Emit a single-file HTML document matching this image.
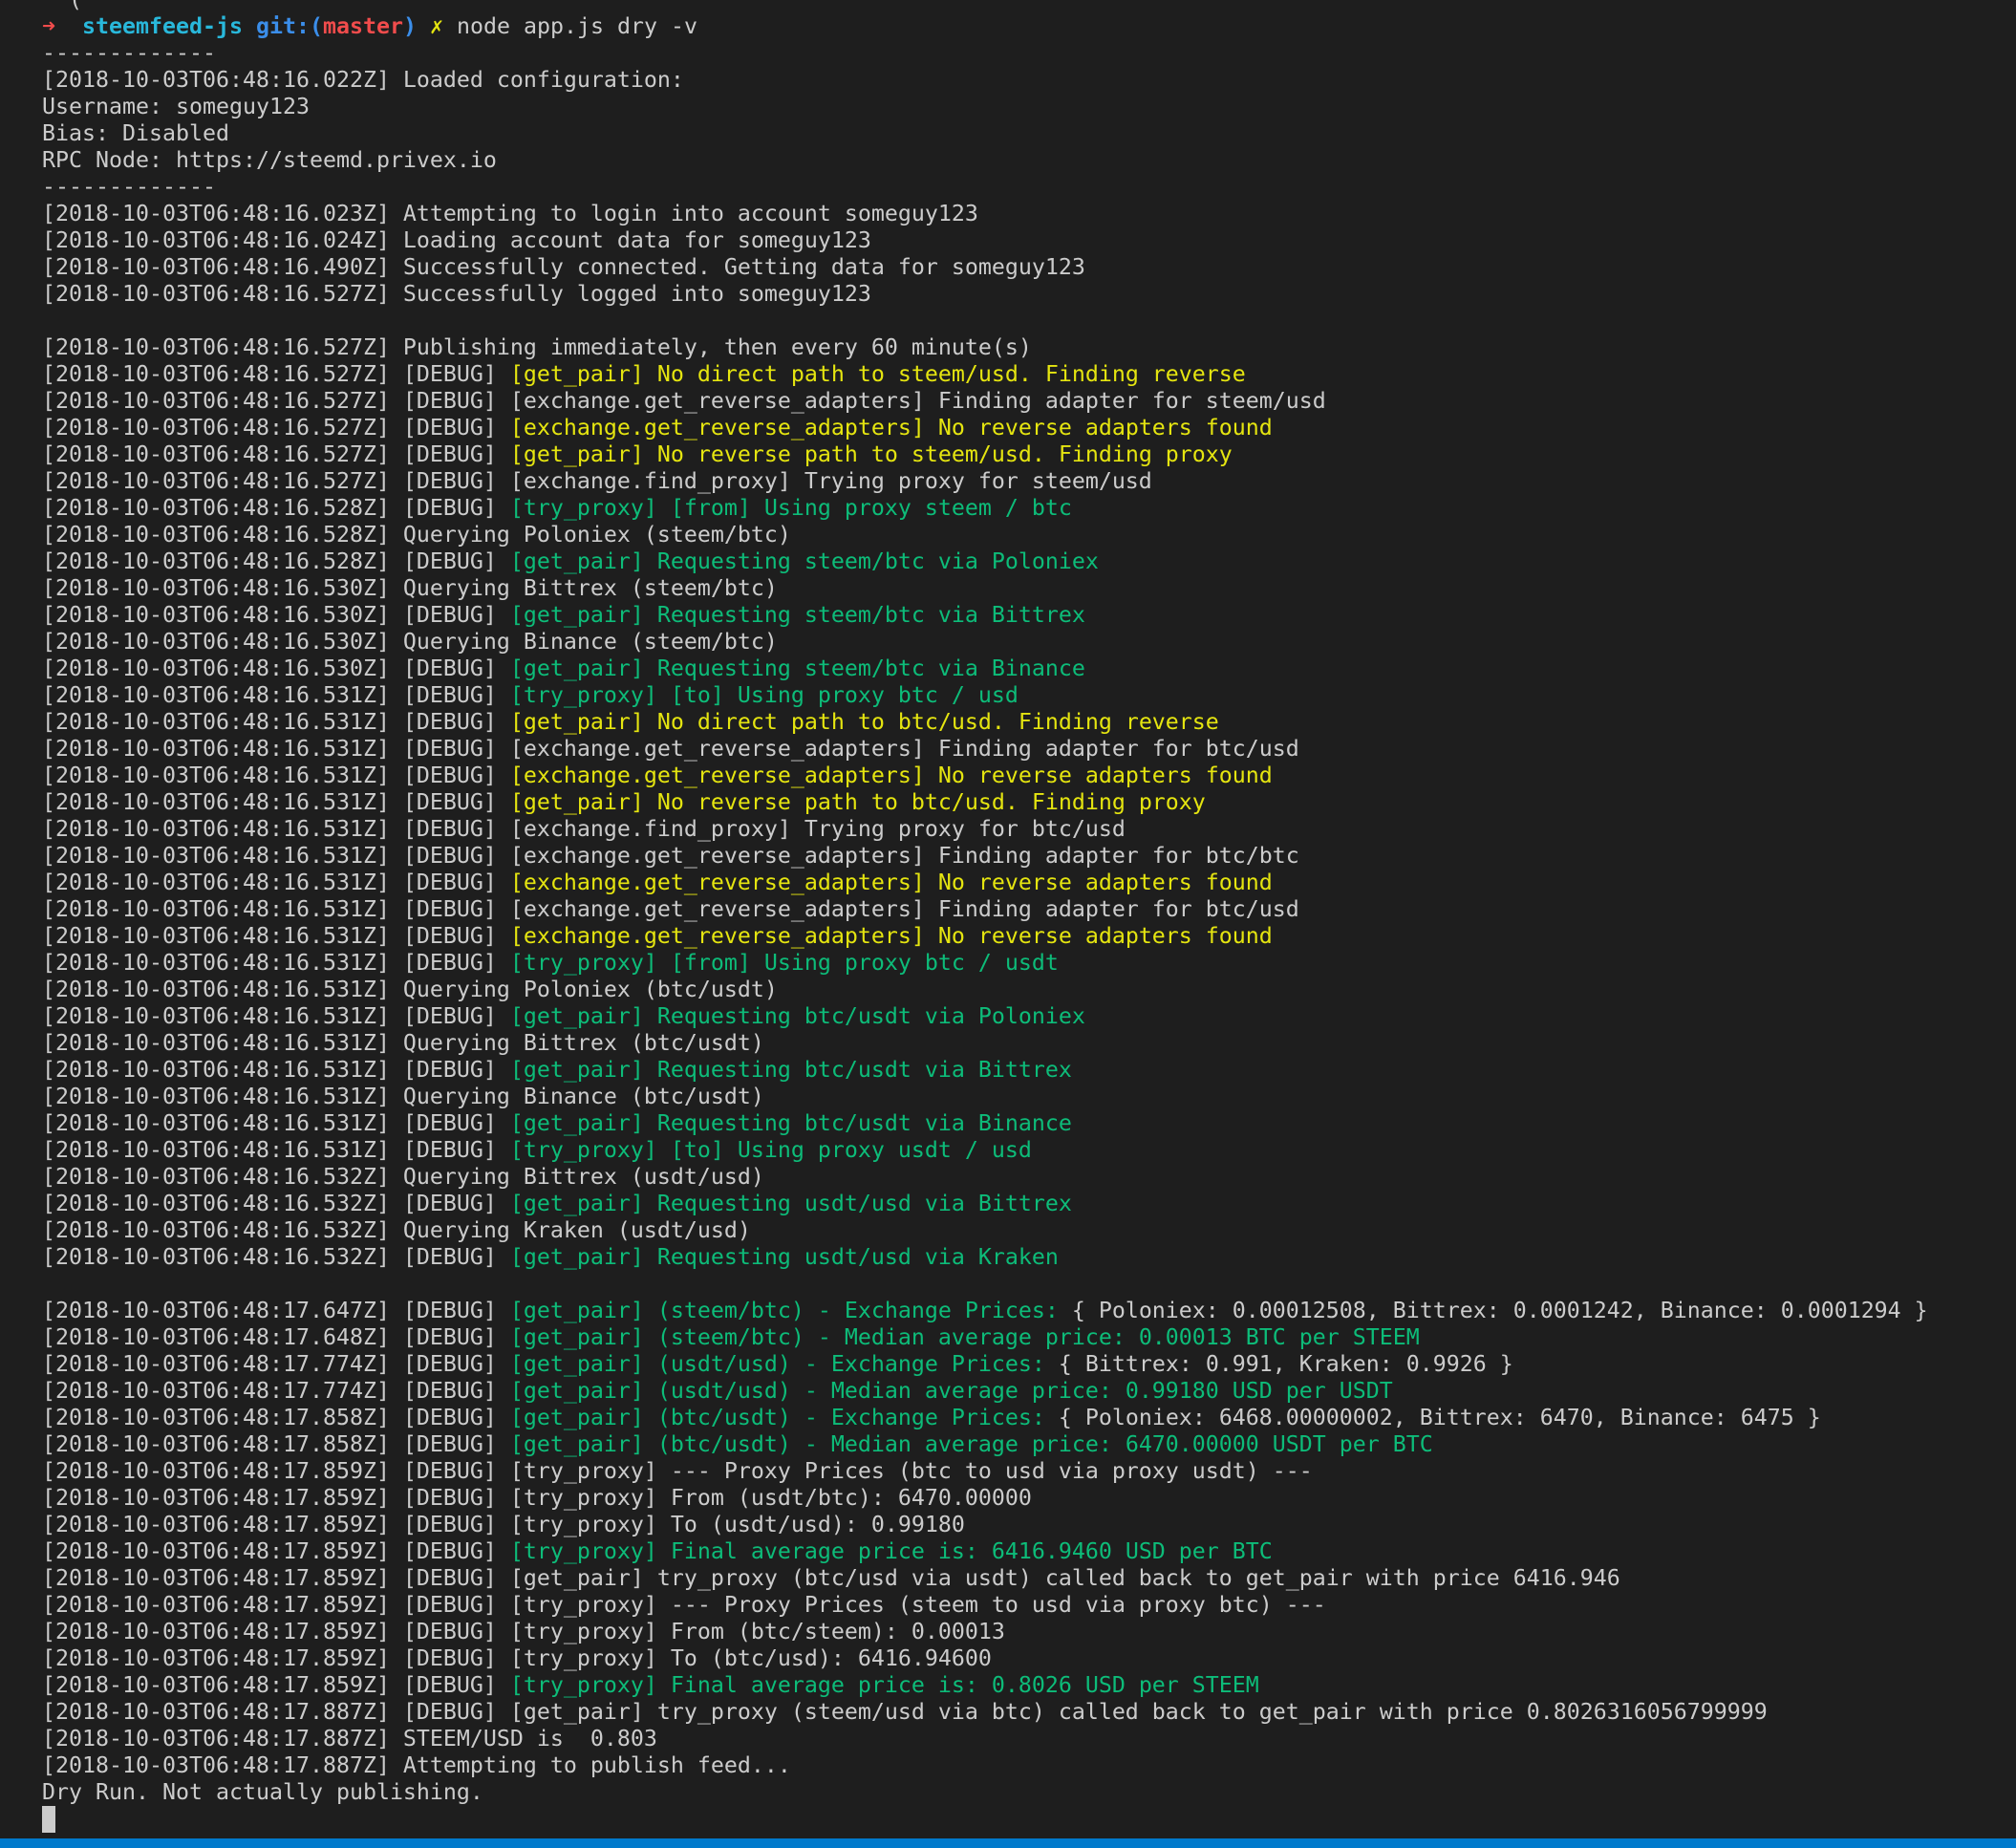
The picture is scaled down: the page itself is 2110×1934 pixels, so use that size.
<!DOCTYPE html>
<html><head><meta charset="utf-8"><style>
html,body{margin:0;padding:0;background:#1e1e1e;width:2110px;height:1934px;overflow:hidden;position:relative}
pre{position:absolute;left:44px;top:-14px;margin:0;font-family:"DejaVu Sans Mono","Liberation Mono",monospace;font-size:23.25px;line-height:28px;color:#cccccc;white-space:pre}
.y{color:#e5e510}.g{color:#0dbc79}.r{color:#f14c4c}.c{color:#29b8db;font-weight:bold}.b{color:#3b8eea;font-weight:bold}
.cur{display:inline-block;width:14px;height:28px;background:#cccccc;vertical-align:top}
.bar{position:absolute;left:0;bottom:0;width:2110px;height:10px;background:#007acc}
</style></head><body><pre>  (
<span class="r">➜</span>  <span class="c">steemfeed-js</span> <span class="b">git:(</span><span class="r" style="font-weight:bold">master</span><span class="b">)</span> <span class="y">✗</span> node app.js dry -v
-------------
[2018-10-03T06:48:16.022Z] Loaded configuration:
Username: someguy123
Bias: Disabled
RPC Node: https://steemd.privex.io
-------------
[2018-10-03T06:48:16.023Z] Attempting to login into account someguy123
[2018-10-03T06:48:16.024Z] Loading account data for someguy123
[2018-10-03T06:48:16.490Z] Successfully connected. Getting data for someguy123
[2018-10-03T06:48:16.527Z] Successfully logged into someguy123

[2018-10-03T06:48:16.527Z] Publishing immediately, then every 60 minute(s)
[2018-10-03T06:48:16.527Z] [DEBUG] <span class="y">[get_pair] No direct path to steem/usd. Finding reverse</span>
[2018-10-03T06:48:16.527Z] [DEBUG] [exchange.get_reverse_adapters] Finding adapter for steem/usd
[2018-10-03T06:48:16.527Z] [DEBUG] <span class="y">[exchange.get_reverse_adapters] No reverse adapters found</span>
[2018-10-03T06:48:16.527Z] [DEBUG] <span class="y">[get_pair] No reverse path to steem/usd. Finding proxy</span>
[2018-10-03T06:48:16.527Z] [DEBUG] [exchange.find_proxy] Trying proxy for steem/usd
[2018-10-03T06:48:16.528Z] [DEBUG] <span class="g">[try_proxy] [from] Using proxy steem / btc</span>
[2018-10-03T06:48:16.528Z] Querying Poloniex (steem/btc)
[2018-10-03T06:48:16.528Z] [DEBUG] <span class="g">[get_pair] Requesting steem/btc via Poloniex</span>
[2018-10-03T06:48:16.530Z] Querying Bittrex (steem/btc)
[2018-10-03T06:48:16.530Z] [DEBUG] <span class="g">[get_pair] Requesting steem/btc via Bittrex</span>
[2018-10-03T06:48:16.530Z] Querying Binance (steem/btc)
[2018-10-03T06:48:16.530Z] [DEBUG] <span class="g">[get_pair] Requesting steem/btc via Binance</span>
[2018-10-03T06:48:16.531Z] [DEBUG] <span class="g">[try_proxy] [to] Using proxy btc / usd</span>
[2018-10-03T06:48:16.531Z] [DEBUG] <span class="y">[get_pair] No direct path to btc/usd. Finding reverse</span>
[2018-10-03T06:48:16.531Z] [DEBUG] [exchange.get_reverse_adapters] Finding adapter for btc/usd
[2018-10-03T06:48:16.531Z] [DEBUG] <span class="y">[exchange.get_reverse_adapters] No reverse adapters found</span>
[2018-10-03T06:48:16.531Z] [DEBUG] <span class="y">[get_pair] No reverse path to btc/usd. Finding proxy</span>
[2018-10-03T06:48:16.531Z] [DEBUG] [exchange.find_proxy] Trying proxy for btc/usd
[2018-10-03T06:48:16.531Z] [DEBUG] [exchange.get_reverse_adapters] Finding adapter for btc/btc
[2018-10-03T06:48:16.531Z] [DEBUG] <span class="y">[exchange.get_reverse_adapters] No reverse adapters found</span>
[2018-10-03T06:48:16.531Z] [DEBUG] [exchange.get_reverse_adapters] Finding adapter for btc/usd
[2018-10-03T06:48:16.531Z] [DEBUG] <span class="y">[exchange.get_reverse_adapters] No reverse adapters found</span>
[2018-10-03T06:48:16.531Z] [DEBUG] <span class="g">[try_proxy] [from] Using proxy btc / usdt</span>
[2018-10-03T06:48:16.531Z] Querying Poloniex (btc/usdt)
[2018-10-03T06:48:16.531Z] [DEBUG] <span class="g">[get_pair] Requesting btc/usdt via Poloniex</span>
[2018-10-03T06:48:16.531Z] Querying Bittrex (btc/usdt)
[2018-10-03T06:48:16.531Z] [DEBUG] <span class="g">[get_pair] Requesting btc/usdt via Bittrex</span>
[2018-10-03T06:48:16.531Z] Querying Binance (btc/usdt)
[2018-10-03T06:48:16.531Z] [DEBUG] <span class="g">[get_pair] Requesting btc/usdt via Binance</span>
[2018-10-03T06:48:16.531Z] [DEBUG] <span class="g">[try_proxy] [to] Using proxy usdt / usd</span>
[2018-10-03T06:48:16.532Z] Querying Bittrex (usdt/usd)
[2018-10-03T06:48:16.532Z] [DEBUG] <span class="g">[get_pair] Requesting usdt/usd via Bittrex</span>
[2018-10-03T06:48:16.532Z] Querying Kraken (usdt/usd)
[2018-10-03T06:48:16.532Z] [DEBUG] <span class="g">[get_pair] Requesting usdt/usd via Kraken</span>

[2018-10-03T06:48:17.647Z] [DEBUG] <span class="g">[get_pair] (steem/btc) - Exchange Prices:</span> { Poloniex: 0.00012508, Bittrex: 0.0001242, Binance: 0.0001294 }
[2018-10-03T06:48:17.648Z] [DEBUG] <span class="g">[get_pair] (steem/btc) - Median average price: 0.00013 BTC per STEEM</span>
[2018-10-03T06:48:17.774Z] [DEBUG] <span class="g">[get_pair] (usdt/usd) - Exchange Prices:</span> { Bittrex: 0.991, Kraken: 0.9926 }
[2018-10-03T06:48:17.774Z] [DEBUG] <span class="g">[get_pair] (usdt/usd) - Median average price: 0.99180 USD per USDT</span>
[2018-10-03T06:48:17.858Z] [DEBUG] <span class="g">[get_pair] (btc/usdt) - Exchange Prices:</span> { Poloniex: 6468.00000002, Bittrex: 6470, Binance: 6475 }
[2018-10-03T06:48:17.858Z] [DEBUG] <span class="g">[get_pair] (btc/usdt) - Median average price: 6470.00000 USDT per BTC</span>
[2018-10-03T06:48:17.859Z] [DEBUG] [try_proxy] --- Proxy Prices (btc to usd via proxy usdt) ---
[2018-10-03T06:48:17.859Z] [DEBUG] [try_proxy] From (usdt/btc): 6470.00000
[2018-10-03T06:48:17.859Z] [DEBUG] [try_proxy] To (usdt/usd): 0.99180
[2018-10-03T06:48:17.859Z] [DEBUG] <span class="g">[try_proxy] Final average price is: 6416.9460 USD per BTC</span>
[2018-10-03T06:48:17.859Z] [DEBUG] [get_pair] try_proxy (btc/usd via usdt) called back to get_pair with price 6416.946
[2018-10-03T06:48:17.859Z] [DEBUG] [try_proxy] --- Proxy Prices (steem to usd via proxy btc) ---
[2018-10-03T06:48:17.859Z] [DEBUG] [try_proxy] From (btc/steem): 0.00013
[2018-10-03T06:48:17.859Z] [DEBUG] [try_proxy] To (btc/usd): 6416.94600
[2018-10-03T06:48:17.859Z] [DEBUG] <span class="g">[try_proxy] Final average price is: 0.8026 USD per STEEM</span>
[2018-10-03T06:48:17.887Z] [DEBUG] [get_pair] try_proxy (steem/usd via btc) called back to get_pair with price 0.8026316056799999
[2018-10-03T06:48:17.887Z] STEEM/USD is  0.803
[2018-10-03T06:48:17.887Z] Attempting to publish feed...
Dry Run. Not actually publishing.
<span class="cur"></span></pre>
<div class="bar"></div>
</body></html>
